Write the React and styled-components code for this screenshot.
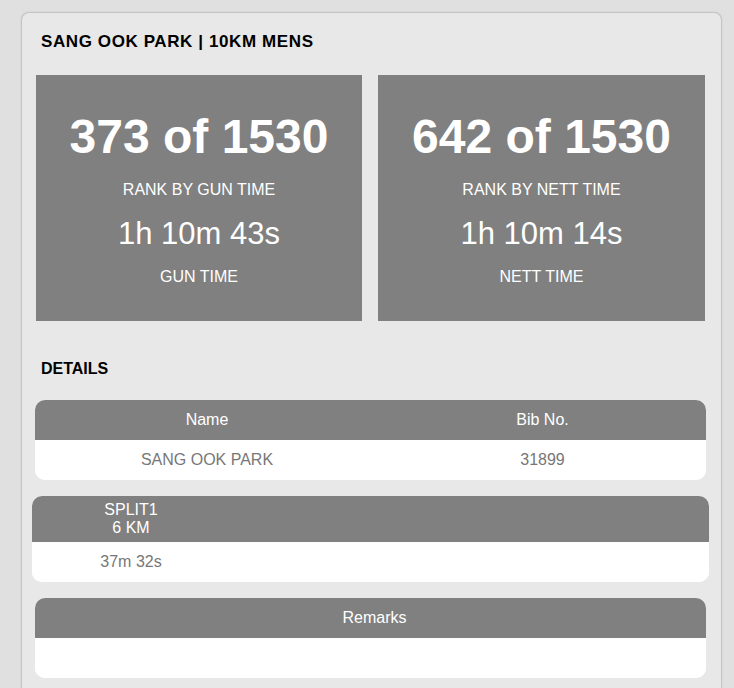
import styled, { createGlobalStyle } from 'styled-components';

const GlobalStyle = createGlobalStyle`
  html, body {
    margin: 0;
    padding: 0;
    background: #e1e0e1;
    font-family: "Liberation Sans", Arial, sans-serif;
  }
`;

const Page = styled.div`
  padding: 12px 12px 0 21px;
`;

const Card = styled.div`
  background: #e8e8e8;
  border: 1px solid #c4c4c4;
  border-bottom: none;
  border-radius: 8px 8px 0 0;
  box-shadow: 0 0 2px rgba(0, 0, 0, 0.08);
  padding: 0 15px 10px 13px;
  min-height: 676px;
  box-sizing: border-box;
`;

const SectionTitle = styled.h2`
  margin: 0;
  padding-left: 6px;
  font-size: 16px;
  font-weight: bold;
  letter-spacing: ${(p) => p.$spacing || '0'};
  color: #000;
  line-height: 18px;
`;

const StatsRow = styled.div`
  display: grid;
  grid-template-columns: 326px 1fr;
  gap: 16px;
  margin: 24px 1px 0 1px;
`;

const StatBox = styled.div`
  background: #808080;
  color: #fff;
  height: 246px;
  box-sizing: border-box;
  padding-top: 34px;
  display: flex;
  flex-direction: column;
  align-items: center;
  text-align: center;
`;

const Rank = styled.div`
  font-size: 48px;
  font-weight: bold;
  line-height: 55px;
`;

const Label = styled.div`
  font-size: 16px;
  line-height: 18px;
  margin-top: ${(p) => p.$top}px;
`;

const Time = styled.div`
  font-size: 31px;
  line-height: 36px;
  margin-top: 17px;
`;

const DetailsTitle = styled(SectionTitle)`
  margin-top: 39px;
`;

const Table = styled.div`
  border-radius: 10px;
  overflow: hidden;
  background: #fff;
  margin: ${(p) => p.$margin};
`;

const HeadRow = styled.div`
  display: grid;
  grid-template-columns: ${(p) => p.$cols};
  background: #808080;
  color: #fff;
  min-height: ${(p) => p.$height || 40}px;
  align-items: center;
`;

const BodyRow = styled.div`
  display: grid;
  grid-template-columns: ${(p) => p.$cols};
  background: #fff;
  color: #777;
  height: 40px;
  align-items: center;
`;

const Cell = styled.div`
  font-size: 16px;
  line-height: 18.5px;
  text-align: center;
`;

export default function App() {
  return (
    <>
      <GlobalStyle />
      <Page>
        <Card>
          <SectionTitle $spacing="0.6px" style={{ fontSize: 17, paddingTop: 20 }}>
            SANG OOK PARK | 10KM MENS
          </SectionTitle>
          <StatsRow>
            <StatBox>
              <Rank>373 of 1530</Rank>
              <Label $top={17}>RANK BY GUN TIME</Label>
              <Time>1h 10m 43s</Time>
              <Label $top={16}>GUN TIME</Label>
            </StatBox>
            <StatBox>
              <Rank>642 of 1530</Rank>
              <Label $top={17}>RANK BY NETT TIME</Label>
              <Time>1h 10m 14s</Time>
              <Label $top={16}>NETT TIME</Label>
            </StatBox>
          </StatsRow>

          <DetailsTitle>DETAILS</DetailsTitle>

          <Table $margin="22px 0 0 0">
            <HeadRow $cols="344px 1fr">
              <Cell>Name</Cell>
              <Cell>Bib No.</Cell>
            </HeadRow>
            <BodyRow $cols="344px 1fr">
              <Cell>SANG OOK PARK</Cell>
              <Cell>31899</Cell>
            </BodyRow>
          </Table>

          <Table $margin="16px -3px 0 -3px">
            <HeadRow $cols="198px 1fr" $height={46}>
              <Cell>
                SPLIT1
                <br />
                6 KM
              </Cell>
              <Cell />
            </HeadRow>
            <BodyRow $cols="198px 1fr">
              <Cell>37m 32s</Cell>
              <Cell />
            </BodyRow>
          </Table>

          <Table $margin="16px 0 0 0">
            <HeadRow $cols="1fr">
              <Cell style={{ paddingLeft: 8 }}>Remarks</Cell>
            </HeadRow>
            <BodyRow $cols="1fr">
              <Cell />
            </BodyRow>
          </Table>
        </Card>
      </Page>
    </>
  );
}
